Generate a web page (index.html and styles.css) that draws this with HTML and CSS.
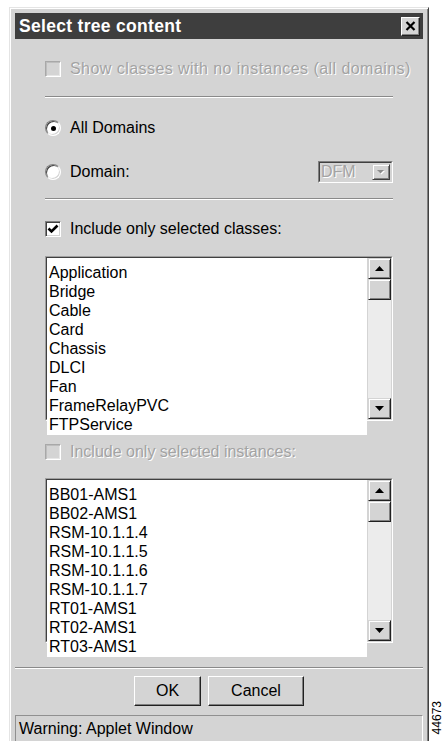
FILE: index.html
```html
<!DOCTYPE html>
<html lang="en">
<head>
<meta charset="utf-8">
<title>Select tree content</title>
<link rel="stylesheet" href="styles.css">
</head>
<body>
<div class="page">
  <div class="window">
    <div class="titlebar">
      <span class="title">Select tree content</span>
      <span class="close" aria-label="Close">
        <svg width="11" height="10" viewBox="0 0 11 10"><path d="M1.5 1 L9.5 9 M9.5 1 L1.5 9" stroke="#000" stroke-width="2.2" fill="none"/></svg>
      </span>
    </div>

    <div class="content">
      <div class="row row-show disabled">
        <span class="check off"></span>
        <span class="wide">Show classes with no instances (all domains)</span>
      </div>
      <div class="sep sep-1"></div>

      <div class="row row-all">
        <span class="radio on"><span class="dot"></span></span>
        <span>All Domains</span>
      </div>
      <div class="row row-domain">
        <span class="radio"></span>
        <span class="grow">Domain:</span>
        <div class="combo">
          <div class="combo-in">
            <span class="combo-text">DFM</span>
            <span class="combo-btn">
              <svg width="8" height="5" viewBox="0 0 8 5"><path d="M1 1 H8 L4.5 4.5 Z" fill="#fff"/><path d="M0 0 H7 L3.5 3.5 Z" fill="#8c8c8c"/></svg>
            </span>
          </div>
        </div>
      </div>
      <div class="sep sep-2"></div>

      <div class="row row-classes">
        <span class="check">
          <svg width="14" height="14" viewBox="0 0 14 14"><path d="M2.5 6.5 L5.5 9.5 L11.5 3.5" stroke="#000" stroke-width="2.6" fill="none"/></svg>
        </span>
        <span>Include only selected classes:</span>
      </div>

      <div class="listbox list-classes">
        <div class="lb-in">
          <div class="items">
            <div>Application</div>
            <div>Bridge</div>
            <div>Cable</div>
            <div>Card</div>
            <div>Chassis</div>
            <div>DLCI</div>
            <div>Fan</div>
            <div>FrameRelayPVC</div>
            <div>FTPService</div>
          </div>
          <div class="scrollbar">
            <span class="sb-btn"><svg width="9" height="5" viewBox="0 0 9 5"><path d="M4.5 0 L9 5 H0 Z" fill="#000"/></svg></span>
            <span class="sb-thumb"></span>
            <span class="sb-track"></span>
            <span class="sb-btn"><svg width="9" height="5" viewBox="0 0 9 5"><path d="M0 0 H9 L4.5 5 Z" fill="#000"/></svg></span>
          </div>
        </div>
      </div>

      <div class="row row-instances disabled">
        <span class="check off"></span>
        <span>Include only selected instances:</span>
      </div>

      <div class="listbox list-instances">
        <div class="lb-in">
          <div class="items">
            <div>BB01-AMS1</div>
            <div>BB02-AMS1</div>
            <div>RSM-10.1.1.4</div>
            <div>RSM-10.1.1.5</div>
            <div>RSM-10.1.1.6</div>
            <div>RSM-10.1.1.7</div>
            <div>RT01-AMS1</div>
            <div>RT02-AMS1</div>
            <div>RT03-AMS1</div>
          </div>
          <div class="scrollbar">
            <span class="sb-btn"><svg width="9" height="5" viewBox="0 0 9 5"><path d="M4.5 0 L9 5 H0 Z" fill="#000"/></svg></span>
            <span class="sb-thumb"></span>
            <span class="sb-track"></span>
            <span class="sb-btn"><svg width="9" height="5" viewBox="0 0 9 5"><path d="M0 0 H9 L4.5 5 Z" fill="#000"/></svg></span>
          </div>
        </div>
      </div>
    </div>

    <div class="sep sep-full"></div>

    <div class="buttons">
      <span class="btn btn-ok">OK</span>
      <span class="btn btn-cancel">Cancel</span>
    </div>

    <div class="status">Warning: Applet Window</div>
  </div>

  <div class="figno">44673</div>
</div>
</body>
</html>
```

FILE: styles.css
```css
* { box-sizing: border-box; }

html, body {
  margin: 0;
  padding: 0;
  background: #fff;
}

body {
  font-family: "Liberation Sans", Arial, sans-serif;
  font-size: 16px;
  color: #000;
  overflow: hidden;
}

.page {
  display: flex;
  align-items: flex-start;
  padding: 7px 0 0 9px;
  height: 741px;
}

/* dialog frame */
.window {
  width: 420px;
  background: #d4d4d4;
  border: 1px solid;
  border-color: #e4e4e4 #404040 #404040 #e4e4e4;
  box-shadow: inset 1px 1px #fff, inset -1px -1px #808080;
  padding: 5px;
}

.titlebar {
  height: 26px;
  background: #3e3e3e;
  display: flex;
  align-items: center;
  justify-content: space-between;
  padding: 0 3px 0 4px;
}

.title {
  color: #fff;
  font-weight: bold;
  font-size: 17.5px;
  letter-spacing: 0.3px;
}

.close {
  width: 19px;
  height: 19px;
  display: flex;
  align-items: center;
  justify-content: center;
  background: #d4d4d4;
  border: 1px solid;
  border-color: #fff #202020 #202020 #fff;
  box-shadow: inset -1px -1px #808080;
}

.content {
  padding: 0 30px;
}

.row {
  display: flex;
  align-items: center;
  height: 20px;
  gap: 9px;
  white-space: nowrap;
}

.disabled {
  color: #a3a3a3;
  text-shadow: 1px 1px 0 #fff;
}

.wide { letter-spacing: 0.45px; }

.row-show { margin-top: 20px; }
.row-all { margin-top: 20px; }
.row-domain { margin-top: 23px; height: 22px; }
.row-classes { margin-top: 19px; }
.row-instances { margin-top: 21px; }

.grow { flex: 1; }

/* etched separators */
.sep {
  height: 2px;
  border-top: 1px solid #8a8a8a;
  border-bottom: 1px solid #fff;
}
.sep-1 { margin-top: 17px; }
.sep-2 { margin-top: 15px; }
.sep-full { margin-top: 24px; }

/* checkbox and radio */
.check {
  width: 16px;
  height: 16px;
  flex: none;
  display: flex;
  align-items: center;
  justify-content: center;
  background: #fff;
  border: 1px solid;
  border-color: #808080 #fff #fff #808080;
  box-shadow: inset 1px 1px #404040, inset -1px -1px #d4d4d4;
}
.check.off {
  background: #d4d4d4;
  border-color: #a8a8a8 #fff #fff #a8a8a8;
  box-shadow: inset 1px 1px #bdbdbd, inset -1px -1px #e6e6e6;
}

.radio {
  width: 16px;
  height: 16px;
  flex: none;
  border-radius: 50%;
  background: #fff;
  border: 1px solid;
  border-color: #808080 #fff #fff #808080;
  box-shadow: inset 1px 1px #404040, inset -1px -1px #d4d4d4;
  display: flex;
  align-items: center;
  justify-content: center;
}
.radio .dot {
  width: 5px;
  height: 5px;
  border-radius: 50%;
  background: #000;
}

/* disabled combo box */
.combo {
  width: 75px;
  height: 22px;
  border: 1px solid;
  border-color: #808080 #fff #fff #808080;
}
.combo-in {
  height: 100%;
  display: flex;
  align-items: center;
  border: 1px solid;
  border-color: #404040 #d4d4d4 #d4d4d4 #404040;
  padding: 0 1px 0 1px;
}
.combo-text {
  flex: 1;
  color: #a3a3a3;
  text-shadow: 1px 1px 0 #fff;
  line-height: 18px;
}
.combo-btn {
  width: 18px;
  height: 16px;
  display: flex;
  align-items: center;
  justify-content: center;
  border: 1px solid;
  border-color: #d4d4d4 #404040 #404040 #d4d4d4;
  box-shadow: inset 1px 1px #fff, inset -1px -1px #808080;
}

/* list boxes */
.listbox {
  height: 165px;
  border: 1px solid;
  border-color: #a0a0a0 #fff #fff #a0a0a0;
}
.list-classes { margin-top: 17px; }
.list-instances { margin-top: 16px; }

.lb-in {
  height: 100%;
  display: flex;
  align-items: flex-start;
  border: 1px solid;
  border-color: #404040 #d4d4d4 #d4d4d4 #404040;
}

.items {
  flex: 1;
  height: 177px;
  background: #fff;
  padding: 5px 0 0 2px;
  line-height: 19px;
  margin-right: 1px;
}

.scrollbar {
  width: 23px;
  height: 100%;
  display: flex;
  flex-direction: column;
}
.sb-btn, .sb-thumb {
  height: 21px;
  flex: none;
  display: flex;
  align-items: center;
  justify-content: center;
  background: #d4d4d4;
  border: 1px solid;
  border-color: #d4d4d4 #202020 #202020 #d4d4d4;
  box-shadow: inset 1px 1px #fff, inset -1px -1px #808080;
}
.sb-track {
  flex: 1;
  background: #ececec;
}

/* push buttons */
.buttons {
  margin-top: 7px;
  display: flex;
  justify-content: center;
  gap: 7px;
}
.btn {
  height: 30px;
  display: flex;
  align-items: center;
  justify-content: center;
  background: #d4d4d4;
  border: 1px solid;
  border-color: #fff #202020 #202020 #fff;
  box-shadow: inset -1px -1px #808080;
}
.btn-ok { width: 67px; }
.btn-cancel { width: 96px; }

.status {
  margin-top: 9px;
  height: 30px;
  border: 1px solid;
  border-color: #909090 #fff #fff #909090;
  padding: 4px 0 0 3px;
  white-space: nowrap;
}

/* figure number along the right margin */
.figno {
  margin: 694px 0 0 2px;
  writing-mode: vertical-rl;
  transform: rotate(180deg);
  font-size: 12px;
  line-height: 12px;
}
```
